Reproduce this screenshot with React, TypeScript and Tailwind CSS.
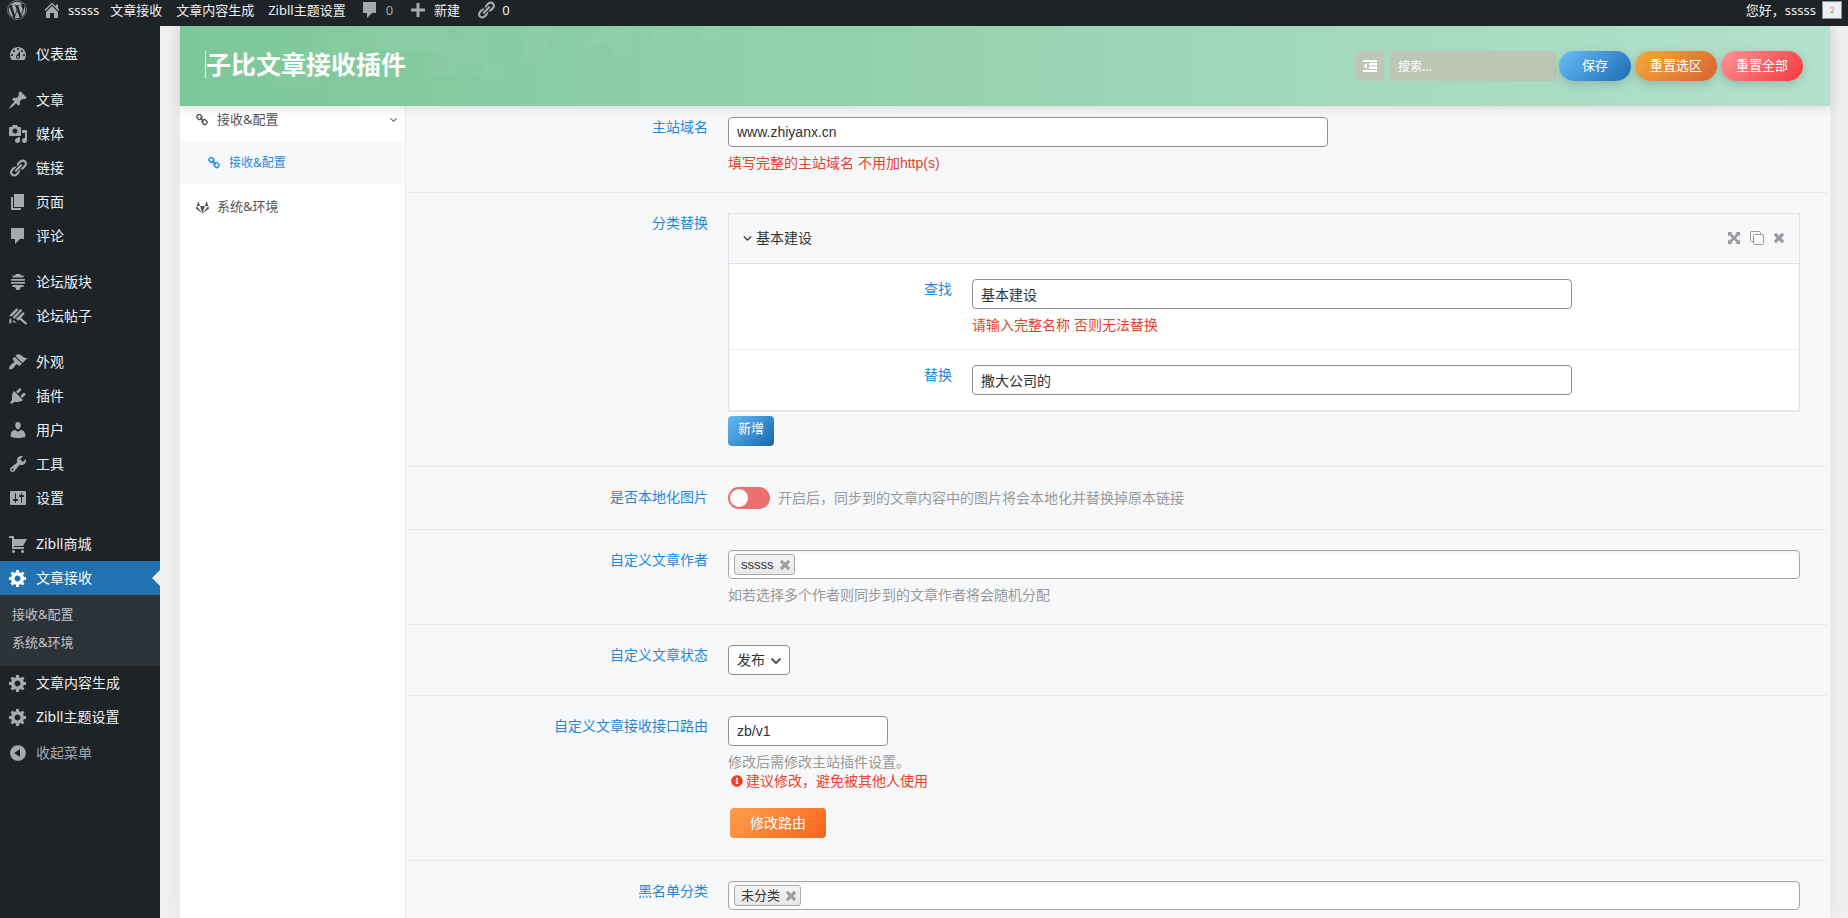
import { useState } from "react";
import type { ReactNode } from "react";
import { FaGitlab, FaInfoCircle, FaWordpress } from "react-icons/fa";

const icons = {
  home: "M16 8.5l1.53 1.53-1.06 1.06L10 4.6l-6.47 6.49-1.06-1.06L10 2.5l4 4v-2h2v4zm-6-2.46l6 5.99V18H12v-5H8v5H4v-5.97z",
  dashboard:
    "M3.76 16h12.48c1.1-1.37 1.76-3.11 1.76-5 0-4.42-3.58-8-8-8s-8 3.58-8 8c0 1.89.66 3.63 1.76 5zM10 4c.55 0 1 .45 1 1s-.45 1-1 1-1-.45-1-1 .45-1 1-1zM6 6c.55 0 1 .45 1 1s-.45 1-1 1-1-.45-1-1 .45-1 1-1zm8 0c.55 0 1 .45 1 1s-.45 1-1 1-1-.45-1-1 .45-1 1-1zm-5.37 5.55L12 7v6c0 1.1-.9 2-2 2s-2-.9-2-2c0-.57.24-1.08.63-1.45zM4 10c.55 0 1 .45 1 1s-.45 1-1 1-1-.45-1-1 .45-1 1-1zm12 0c.55 0 1 .45 1 1s-.45 1-1 1-1-.45-1-1 .45-1 1-1zm-5 3c0-.55-.45-1-1-1s-1 .45-1 1 .45 1 1 1 1-.45 1-1z",
  post: "M10.44 3.02l1.82-1.82 6.36 6.35-1.83 1.82c-1.05-.68-2.48-.57-3.41.36l-.75.75c-.92.93-1.04 2.35-.35 3.41l-1.83 1.82-2.41-2.41-2.8 2.79c-.42.42-3.38 2.71-3.8 2.29s1.86-3.39 2.28-3.81l2.79-2.79L4.1 9.36l1.83-1.82c1.05.69 2.48.57 3.4-.36l.75-.75c.93-.92 1.05-2.35.36-3.41z",
  media:
    "M13 11V4c0-.55-.45-1-1-1h-1.67L9 1H5L3.67 3H2c-.55 0-1 .45-1 1v7c0 .55.45 1 1 1h10c.55 0 1-.45 1-1zM7 4.5c1.38 0 2.5 1.12 2.5 2.5S8.38 9.5 7 9.5 4.5 8.38 4.5 7 5.62 4.5 7 4.5zM14 6h5v10.5c0 1.38-1.12 2.5-2.5 2.5S14 17.88 14 16.5s1.12-2.5 2.5-2.5c.17 0 .34.02.5.05V9h-3V6zm-4 8.05V13h2v3.5c0 1.38-1.12 2.5-2.5 2.5S7 17.88 7 16.5 8.12 14 9.5 14c.17 0 .34.02.5.05z",
  links:
    "M17.74 2.76c1.68 1.69 1.68 4.41 0 6.1l-1.53 1.52c-1.12 1.12-2.7 1.47-4.14 1.09l2.62-2.61.76-.77.76-.76c.84-.84.84-2.2 0-3.04-.84-.85-2.2-.85-3.04 0l-.77.76-3.38 3.38c-.37-1.44-.02-3.02 1.1-4.14l1.52-1.53c1.69-1.68 4.42-1.68 6.1 0zM8.59 13.43l5.34-5.34c.42-.42.42-1.1 0-1.52-.44-.43-1.13-.39-1.53 0l-5.33 5.34c-.42.42-.42 1.1 0 1.52.44.43 1.13.39 1.52 0zm-.76 2.29l4.14-4.15c.38 1.44.03 3.02-1.09 4.14l-1.52 1.53c-1.69 1.68-4.41 1.68-6.1 0-1.68-1.68-1.68-4.42 0-6.1l1.53-1.52c1.12-1.12 2.7-1.47 4.14-1.1l-4.14 4.15c-.85.84-.85 2.2 0 3.05.84.84 2.2.84 3.04 0z",
  page: "M6 15V2h10v13H6zm-1 1h8v2H3V5h2v11z",
  comments: "M4 2h11c.6 0 1 .4 1 1v9c0 .6-.4 1-1 1h-3l-5 5v-5H4c-.6 0-1-.4-1-1V3c0-.6.4-1 1-1z",
  forums:
    "M8 2h4l1 1.500h2c1 0 1 2 0 2H5c-1 0-1-2 0-2h2zM3.500 7h13c.8 0 .8 1.800 0 1.800h-13c-.8 0-.8-1.800 0-1.800zM3.500 10h13c.8 0 .8 1.800 0 1.800h-13c-.8 0-.8-1.800 0-1.800zM5 13h10c1 0 1 2 0 2h-2l-1.500 3h-3L7 15H5c-1 0-1-2 0-2z",
  topics:
    "M8.500 2.200l2 1.200L4.500 10l-2.700.5c-.4-.8 0-1.500.6-2.200zM12.500 3l1.800 1.600L6.500 13l-1.800-1.800zM15.200 6l1.500 1.700-3.700 4.100 5.800 4.900c.8 1-.6 2.400-1.600 1.600l-5.800-4.900-1.500 1.300L8 12.800zM2 12c2.200 1 2.400 5-.3 6-.7-2-.4-4 .3-6zM5 13.800l3.500 3-3.300-.4z",
  appearance:
    "M14.48 11.06L7.41 3.99l1.5-1.5c.5-.56 2.3-.47 3.51.32 1.21.8 1.43 1.28 2.91 2.1 1.18.64 2.45 1.26 4.45.85zm-.71.71L6.7 4.7 4.93 6.47c-.39.39-.39 1.02 0 1.41l1.06 1.06c.39.39.39 1.03 0 1.42-.6.6-1.43 1.11-2.21 1.69-.35.26-.7.53-1.01.84C1.43 14.23.4 16.08 1.4 17.07c.99 1 2.84-.03 4.18-1.36.31-.31.58-.66.85-1.02.57-.78 1.08-1.61 1.69-2.21.39-.39 1.02-.39 1.41 0l1.06 1.06c.39.39 1.02.39 1.41 0z",
  plugins:
    "M13.11 4.36L9.87 7.6 8 5.73l3.24-3.24c.35-.34 1.05-.2 1.56.32.52.51.66 1.21.31 1.55zm-8 1.77l.91-1.12 9.01 9.01-1.19.84c-.71.71-2.63 1.16-3.82 1.16H6.14L4.9 17.26c-.59.59-1.54.59-2.12 0-.59-.58-.59-1.53 0-2.12l1.24-1.24v-3.88c0-1.13.4-3.19 1.09-3.89zm7.26 3.97l3.24-3.24c.34-.35 1.04-.21 1.55.31.52.51.66 1.21.31 1.55l-3.24 3.25z",
  users:
    "M10 9.25c-2.27 0-2.73-3.44-2.73-3.44C7 4.02 7.82 2 9.97 2c2.16 0 2.98 2.02 2.71 3.81 0 0-.41 3.44-2.68 3.44zm0 2.57L12.72 10c2.39 0 4.52 2.33 4.52 4.53v2.49s-3.65 1.13-7.24 1.13c-3.65 0-7.24-1.13-7.24-1.13v-2.49c0-2.25 1.94-4.48 4.47-4.48z",
  tools:
    "M16.68 9.77c-1.34 1.34-3.3 1.67-4.95.99l-5.41 6.52c-.99.99-2.59.99-3.58 0s-.99-2.59 0-3.57l6.52-5.42c-.68-1.65-.35-3.61.99-4.95 1.28-1.28 3.12-1.62 4.72-1.06l-2.89 2.89 2.82 2.82 2.86-2.87c.53 1.58.18 3.39-1.08 4.65zM3.81 16.21c.4.39 1.04.39 1.43 0 .4-.4.4-1.04 0-1.43-.39-.4-1.03-.4-1.43 0-.39.39-.39 1.03 0 1.43z",
  settings:
    "M18 16V4c0-.55-.45-1-1-1H3c-.55 0-1 .45-1 1v12c0 .55.45 1 1 1h14c.55 0 1-.45 1-1zM8 11h1c.55 0 1 .45 1 1s-.45 1-1 1H8v1.5c0 .28-.22.5-.5.5s-.5-.22-.5-.5V13H6c-.55 0-1-.45-1-1s.45-1 1-1h1V5.5c0-.28.22-.5.5-.5s.5.22.5.5V11zm5-2h-1c-.55 0-1-.45-1-1s.45-1 1-1h1V5.5c0-.28.22-.5.5-.5s.5.22.5.5V7h1c.55 0 1 .45 1 1s-.45 1-1 1h-1v5.5c0 .28-.22.5-.5.5s-.5-.22-.5-.5V9z",
  cart: "M6 13h9c.55 0 1 .45 1 1s-.45 1-1 1H5c-.55 0-1-.45-1-1V4H2c-.55 0-1-.45-1-1s.45-1 1-1h3c.55 0 1 .45 1 1v2h13l-4 7H6v1zm-.5 3c.83 0 1.5.67 1.5 1.5S6.33 19 5.5 19 4 18.33 4 17.5 4.67 16 5.5 16zm9 0c.83 0 1.5.67 1.5 1.5s-.67 1.5-1.5 1.5-1.5-.67-1.5-1.5.67-1.5 1.5-1.5z",
  generic:
    "M18 12h-2.18c-.17.7-.44 1.35-.81 1.93l1.54 1.54-2.1 2.1-1.54-1.54c-.58.36-1.23.63-1.91.79V19H8v-2.18c-.68-.16-1.33-.43-1.91-.79l-1.54 1.54-2.12-2.12 1.54-1.54c-.36-.58-.63-1.23-.79-1.91H1V9.03h2.17c.16-.7.44-1.35.8-1.94L2.43 5.55l2.1-2.1 1.54 1.54c.58-.37 1.24-.64 1.93-.81V2h3v2.18c.68.16 1.33.43 1.91.79l1.54-1.54 2.12 2.12-1.54 1.54c.36.59.64 1.24.8 1.94H18V12zm-8.5 1.5c1.66 0 3-1.34 3-3s-1.34-3-3-3-3 1.34-3 3 1.34 3 3 3z",
  collapse:
    "M10 2.16c4.33 0 7.84 3.51 7.84 7.84s-3.51 7.84-7.84 7.84S2.16 14.33 2.16 10 5.67 2.16 10 2.16zm2 11.72V6.12L6.18 9.97z",
  plus: "M8.500 3h3v5.500H17v3h-5.500V17h-3v-5.500H3v-3h5.500z",
};

type IconName = keyof typeof icons;

function Dashicon({ name }: { name: IconName }) {
  return (
    <svg viewBox="0 0 20 20" className="size-5 shrink-0" fill="currentColor" fillRule="evenodd" aria-hidden="true">
      <path d={icons[name]} />
    </svg>
  );
}

function ChainIcon() {
  return (
    <svg viewBox="64 64 1664 1664" className="size-3 shrink-0" fill="currentColor" aria-hidden="true">
      <path d="M1520 1216q0-40-28-68l-208-208q-28-28-68-28-42 0-72 32 3 3 19 18.5t21.5 21.5 15 19 13 25.5 3.5 27.5q0 40-28 68t-68 28q-15 0-27.5-3.5t-25.5-13-19-15-21.5-21.5-18.5-19q-33 31-33 73 0 40 28 68l206 207q27 27 68 27 40 0 68-26l147-146q28-28 28-67zm-703-705q0-40-28-68l-206-207q-28-28-68-28-39 0-68 27l-147 146q-28 28-28 67 0 40 28 68l208 208q27 27 68 27 42 0 72-31-3-3-19-18.5t-21.5-21.5-15-19-13-25.5-3.5-27.5q0-40 28-68t68-28q15 0 27.5 3.5t25.5 13 19 15 21.5 21.5 18.5 19q33-31 33-73zm895 705q0 120-85 203l-147 146q-83 83-203 83-121 0-204-85l-206-207q-83-83-83-203 0-123 88-209l-88-88q-86 88-208 88-120 0-204-84l-208-208q-84-84-84-204t85-203l147-146q83-83 203-83 121 0 204 85l206 207q83 83 83 203 0 123-88 209l88 88q86-88 208-88 120 0 204 84l208 208q84 84 84 204z" />
    </svg>
  );
}

function AngleDown({ className }: { className: string }) {
  return (
    <svg viewBox="347 500 1098 900" className={className} fill="currentColor" aria-hidden="true">
      <path d="M1395 736q0 13-10 23l-466 466q-10 10-23 10t-23-10l-466-466q-10-10-10-23t10-23l50-50q10-10 23-10t23 10l393 393 393-393q10-10 23-10t23 10l50 50q10 10 10 23z" stroke="currentColor" strokeWidth="40" />
    </svg>
  );
}

function Times() {
  return (
    <svg viewBox="302 366 1188 1188" className="size-[10px]" fill="currentColor" aria-hidden="true">
      <path d="M1490 1322q0 40-28 68l-136 136q-28 28-68 28t-68-28l-294-294-294 294q-28 28-68 28t-68-28l-136-136q-28-28-28-68t28-68l294-294-294-294q-28-28-28-68t28-68l136-136q28-28 68-28t68 28l294 294 294-294q28-28 68-28t68 28l136 136q28 28 28 68t-28 68l-294 294 294 294q28 28 28 68z" />
    </svg>
  );
}

// null is a separator
const menu: ({ icon: IconName; text: string; children?: string[] } | null)[] = [
  { icon: "dashboard", text: "仪表盘" },
  null,
  { icon: "post", text: "文章" },
  { icon: "media", text: "媒体" },
  { icon: "links", text: "链接" },
  { icon: "page", text: "页面" },
  { icon: "comments", text: "评论" },
  null,
  { icon: "forums", text: "论坛版块" },
  { icon: "topics", text: "论坛帖子" },
  null,
  { icon: "appearance", text: "外观" },
  { icon: "plugins", text: "插件" },
  { icon: "users", text: "用户" },
  { icon: "tools", text: "工具" },
  { icon: "settings", text: "设置" },
  null,
  { icon: "cart", text: "Zibll商城" },
  { icon: "generic", text: "文章接收", children: ["接收&配置", "系统&环境"] },
  { icon: "generic", text: "文章内容生成" },
  { icon: "generic", text: "Zibll主题设置" },
];

function AdminBar() {
  return (
    <header className="flex h-[26px] items-start bg-[#1d2327] text-[13px] leading-5 text-[#f0f0f1] [&_svg]:text-[#a7aaad]">
      <a href="#" aria-label="WordPress" className="flex w-[34px] justify-center">
        <FaWordpress className="size-5" />
      </a>
      <a href="#" className="flex gap-[6px] pr-1 pl-2">
        <Dashicon name="home" />
        sssss
      </a>
      <a href="#" className="px-[7px]">文章接收</a>
      <a href="#" className="px-[7px]">文章内容生成</a>
      <a href="#" className="px-[7px]">Zibll主题设置</a>
      <a href="#" className="flex gap-[6px] px-[7px] text-[#a7aaad]">
        <Dashicon name="comments" />0
      </a>
      <a href="#" className="flex gap-[6px] px-2">
        <Dashicon name="plus" />
        新建
      </a>
      <a href="#" className="flex gap-[6px] px-2">
        <Dashicon name="links" />0
      </a>
      <a href="#" className="ml-auto flex gap-[6px] pr-[6px]">
        您好，sssss
        <span className="mt-px flex h-[18px] w-5 items-center justify-center border border-[#8c8f94] bg-[#eaf1f5]">
          <svg viewBox="0 0 8 10" className="h-2 w-[6px]" fill="none" aria-hidden="true">
            <path d="M1.500 3C2 1 6 1 6.200 3" stroke="#f0b07a" strokeWidth="1.500" />
            <path d="M6.200 3c.3 1.500-1.700 1.500-2.200 2.500" stroke="#ee8b6b" strokeWidth="1.500" />
            <path d="M1.500 8h5" stroke="#8bbf4a" strokeWidth="2" />
          </svg>
        </span>
      </a>
    </header>
  );
}

function AdminMenu() {
  return (
    <nav className="w-40 shrink-0 bg-[#1d2327] pt-[11px] text-[14px] leading-[18px] text-[#f0f0f1]">
      <ul>
        {menu.map((item, i) =>
          item === null ? (
            <li key={i} className="h-3" />
          ) : (
            <li key={i}>
              <a
                href="#"
                className={
                  item.children
                    ? "relative flex h-[34px] items-center gap-2 bg-[#2271b1] pl-2 text-white"
                    : "flex h-[34px] items-center gap-2 pl-2 [&_svg]:text-[#a7aaad]"
                }
              >
                <Dashicon name={item.icon} />
                {item.text}
                {item.children && (
                  <span className="absolute top-[9px] right-0 border-8 border-l-0 border-transparent border-r-[#f0f0f1]" />
                )}
              </a>
              {item.children && (
                <ul className="bg-[#2c3338] pt-[5px] pb-[10px] text-[13px] text-[#c3c4c7]">
                  {item.children.map((c) => (
                    <li key={c}>
                      <a href="#" className="flex h-7 items-center pl-3">
                        {c}
                      </a>
                    </li>
                  ))}
                </ul>
              )}
            </li>
          )
        )}
      </ul>
      <button type="button" className="flex h-[38px] items-center gap-2 pl-2 text-[#a7aaad]">
        <Dashicon name="collapse" />
        收起菜单
      </button>
    </nav>
  );
}

const pill =
  "h-[30px] rounded-full pb-[2px] text-[13px] leading-5 text-white shadow-[0_3px_8px_rgba(60,80,90,0.25)]";

function PanelHeader() {
  return (
    <div className="relative z-10 flex h-20 items-center bg-linear-to-r from-[#7cc798] via-[#98d3b2] to-[#b3e1cd] pr-[27px] pl-[25px] shadow-[0_2px_10px_rgba(60,50,40,0.16)]">
      {/* faint pattern behind the title */}
      <svg viewBox="0 0 640 80" className="absolute top-0 left-0 h-20 w-[640px]" fill="#fff" fillOpacity="0.035" aria-hidden="true">
        <path d="M90 62L150 0h120l-10 26h-90L130 62z" />
        <path d="M196 8h88l-8 40h-28l4-24h-56z" />
        <path d="M286 4h26l-8 34h-26zM346 0h26l-8 36h-20z" />
        <path d="M396 20L424 0h30l-8 28h-14l2-14-26 8zM474 0h20l-6 18h-16zM520 0h22l-8 18h-12z" />
        <path d="M248 46h56v-8h20v12h-76z" />
      </svg>
      <h1 className="relative mb-1 h-[27px] border-l border-white text-[25px] leading-[27px] font-bold text-white">
        子比文章接收插件
      </h1>
      <form className="relative ml-auto flex items-center gap-[3px]" onSubmit={(e) => e.preventDefault()}>
        <button
          type="button"
          aria-label="展开全部"
          className="mr-[3px] flex h-[30px] w-7 items-center justify-center rounded-[3px] bg-[#c0c6b5] text-white"
        >
          <svg viewBox="0 0 14 14" className="size-[14px]" fill="currentColor" aria-hidden="true">
            <path d="M0 1h14v2H0zM6 4h8v2.500H6zM6 7.500h8V10H6zM0 11h14v2H0zM4 4v6L.5 7z" />
          </svg>
        </button>
        <input
          type="text"
          aria-label="搜索"
          placeholder="搜索..."
          className="h-[30px] w-[166px] rounded-[3px] bg-[#c0c6b5] px-2 text-[12px] text-white outline-none placeholder:text-white"
        />
        <div className="flex gap-1">
          <button type="submit" className={`${pill} w-[72px] bg-[linear-gradient(135deg,#69bdf6,#1c6cb4)]`}>
            保存
          </button>
          <button type="button" className={`${pill} w-[82px] bg-[linear-gradient(135deg,#f2ac3a,#d9632f)]`}>
            重置选区
          </button>
          <button type="button" className={`${pill} w-[82px] bg-[linear-gradient(135deg,#ff9395,#f4383c)]`}>
            重置全部
          </button>
        </div>
      </form>
    </div>
  );
}

function SectionNav() {
  return (
    <nav className="w-[226px] shrink-0 border-r border-[#eeeef0] bg-white text-[13px] text-[#555]">
      <a href="#" className="flex h-9 items-center gap-[9px] pr-2 pb-2 pl-4">
        <ChainIcon />
        接收&amp;配置
        <AngleDown className="ml-auto h-[6px] w-[7px]" />
      </a>
      <a href="#" className="flex h-[42px] items-center gap-[9px] bg-[#f6f8fa] pl-7 text-[12px] text-[#1e8ae6]">
        <ChainIcon />
        接收&amp;配置
      </a>
      <a href="#" className="flex h-[46px] items-center gap-2 pl-4">
        <FaGitlab className="size-[13px]" />
        系统&amp;环境
      </a>
    </nav>
  );
}

function Field({ id, label, className, children }: { id: string; label: string; className: string; children: ReactNode }) {
  return (
    <div className={`flex gap-5 border-b border-[#ececee] ${className}`}>
      <label htmlFor={id} className="w-[300px] shrink-0 text-right leading-5 text-[#1e88dc]">
        {label}
      </label>
      <div className="min-w-0 flex-1">{children}</div>
    </div>
  );
}

const inputStyle =
  "block h-[30px] max-w-full rounded border border-[#8c8f94] bg-white px-2 text-[14px] text-[#2c3338] outline-none";

function GroupField({ id, label, value, className, children }: { id: string; label: string; value: string; className: string; children?: ReactNode }) {
  return (
    <div className={`flex gap-5 pt-[15px] ${className}`}>
      <label htmlFor={id} className="w-[223px] shrink-0 text-right leading-5 text-[#1e88dc]">
        {label}
      </label>
      <div className="min-w-0 flex-1">
        <input id={id} type="text" defaultValue={value} className={`${inputStyle} w-[600px]`} />
        {children}
      </div>
    </div>
  );
}

function TagBox({ id, tag }: { id: string; tag: string }) {
  return (
    <div className="flex h-[29px] items-center rounded border border-[#a5a7ab] bg-white px-[5px] shadow-[inset_0_1px_3px_rgba(0,0,0,0.08)]">
      <span className="flex h-[21px] items-center gap-[6px] rounded-[3px] border border-[#aaa] bg-linear-to-b from-[#f4f4f4] to-[#e8e8e8] pr-1 pl-[6px] text-[13px] text-[#333]">
        {tag}
        <button type="button" aria-label={`移除 ${tag}`} className="text-[#a0a0a0]">
          <Times />
        </button>
      </span>
      <input id={id} type="text" className="min-w-0 flex-1 bg-transparent px-2 outline-none" />
    </div>
  );
}

const desc = "mt-[7px] leading-[18px]";

export default function App() {
  const [localize, setLocalize] = useState(false);

  return (
    <div className="flex min-h-screen flex-col bg-[#f0f0f1] font-['Noto_Sans','Noto_Sans_CJK_SC',sans-serif]">
      <AdminBar />
      <div className="flex flex-1">
        <AdminMenu />
        <main className="flex min-w-0 flex-1 overflow-hidden pr-[18px] pl-5">
          <div className="flex min-w-0 flex-1 flex-col shadow-[0_0_20px_rgba(40,60,90,0.08)]">
            <PanelHeader />
            <div className="flex flex-1 bg-[#f7f8fa]">
              <SectionNav />
              <div className="min-w-0 flex-1 px-[2px] text-[14px] font-['Liberation_Sans','Noto_Sans_CJK_SC',sans-serif]">
                <Field id="domain" label="主站域名" className="pt-[11px] pr-7 pb-5">
                  <input id="domain" type="text" defaultValue="www.zhiyanx.cn" className={`${inputStyle} w-[600px]`} />
                  <p className={`${desc} text-[#e5432d]`}>填写完整的主站域名 不用加http(s)</p>
                </Field>

                <Field id="find" label="分类替换" className="pt-5 pr-7 pb-5">
                  <div className="border border-[#dfe2e6] bg-white shadow-[0_1px_1px_rgba(0,0,0,0.05)]">
                    <div className="flex h-[50px] items-center border-b border-[#dfe2e6] bg-[#f7f8fa] pr-[15px] pl-[14px] text-[#333]">
                      <AngleDown className="mr-1 h-[7px] w-[9px]" />
                      基本建设
                      <div className="mb-[2px] ml-auto flex items-center gap-[10px] text-[#999b9e]">
                        <button type="button" aria-label="移动">
                          <svg viewBox="0 0 12 12" className="size-3" fill="currentColor" aria-hidden="true">
                            <path d="M0 0h4.500L3.200 1.300 6 4.200l2.800-2.900L7.500 0H12v4.500l-1.300-1.300L7.800 6l2.900 2.800L12 7.500V12H7.500l1.300-1.300L6 7.800l-2.800 2.900L4.500 12H0V7.500l1.300 1.300L4.200 6 1.300 3.200 0 4.500z" />
                          </svg>
                        </button>
                        <button type="button" aria-label="复制">
                          <svg viewBox="0 0 14 14" className="size-[14px]" fill="none" stroke="currentColor" aria-hidden="true">
                            <rect x="3.500" y="3.500" width="10" height="10" rx="1" />
                            <path d="M10.500 3.500v-2c0-.6-.4-1-1-1h-8c-.6 0-1 .4-1 1v8c0 .6.4 1 1 1h2" />
                          </svg>
                        </button>
                        <button type="button" aria-label="删除">
                          <Times />
                        </button>
                      </div>
                    </div>
                    <GroupField id="find" label="查找" value="基本建设" className="border-b border-[#ececee] pb-[15px]">
                      <p className={`${desc} text-[#e5432d]`}>请输入完整名称 否则无法替换</p>
                    </GroupField>
                    <GroupField id="replace" label="替换" value="撒大公司的" className="pb-[15px]" />
                  </div>
                  <button
                    type="button"
                    className="mt-[5px] block h-[30px] w-[46px] rounded bg-[linear-gradient(135deg,#63bdf5,#1766b2)] pb-1 text-[13px] text-white"
                  >
                    新增
                  </button>
                </Field>

                <Field id="localize" label="是否本地化图片" className="pt-5 pr-7 pb-5">
                  <div className="flex h-[22px] items-center gap-2 text-[#999]">
                    <input
                      id="localize"
                      type="checkbox"
                      role="switch"
                      checked={localize}
                      onChange={(e) => setLocalize(e.target.checked)}
                      className="relative h-[22px] w-[42px] shrink-0 appearance-none rounded-full bg-[#ed6f6f] before:absolute before:top-[2px] before:left-[2px] before:size-[18px] before:rounded-full before:bg-white checked:bg-[#4fbf79] checked:before:left-[22px]"
                    />
                    开启后，同步到的文章内容中的图片将会本地化并替换掉原本链接
                  </div>
                </Field>

                <Field id="author" label="自定义文章作者" className="pt-5 pr-7 pb-5">
                  <TagBox id="author" tag="sssss" />
                  <p className={`${desc} text-[#999]`}>如若选择多个作者则同步到的文章作者将会随机分配</p>
                </Field>

                <Field id="status" label="自定义文章状态" className="pt-5 pr-7 pb-5">
                  <div className="relative w-[62px]">
                    <select id="status" className={`${inputStyle} w-full appearance-none`}>
                      <option>发布</option>
                      <option>草稿</option>
                    </select>
                    <svg viewBox="0 0 12 8" className="pointer-events-none absolute top-[12px] right-2 h-2 w-3" fill="none" stroke="#50575e" strokeWidth="2" aria-hidden="true">
                      <path d="M1.500 1.500L6 6l4.500-4.500" />
                    </svg>
                  </div>
                </Field>

                <Field id="route" label="自定义文章接收接口路由" className="pt-5 pr-7 pb-5">
                  <input id="route" type="text" defaultValue="zb/v1" className={`${inputStyle} w-40`} />
                  <p className={`${desc} text-[#999]`}>修改后需修改主站插件设置。</p>
                  <p className="flex items-center gap-[3px] pl-[3px] leading-5 text-[#f0402c]">
                    <FaInfoCircle className="size-3" />
                    建议修改，避免被其他人使用
                  </p>
                  <button
                    type="button"
                    className="mt-[17px] mb-[2px] ml-[2px] block h-[30px] w-24 rounded bg-[linear-gradient(135deg,#fd9d4e,#f8651c)] text-white"
                  >
                    修改路由
                  </button>
                </Field>

                <Field id="blacklist" label="黑名单分类" className="border-b-0 pt-5 pr-7 pb-2">
                  <TagBox id="blacklist" tag="未分类" />
                </Field>
              </div>
            </div>
          </div>
        </main>
      </div>
    </div>
  );
}
